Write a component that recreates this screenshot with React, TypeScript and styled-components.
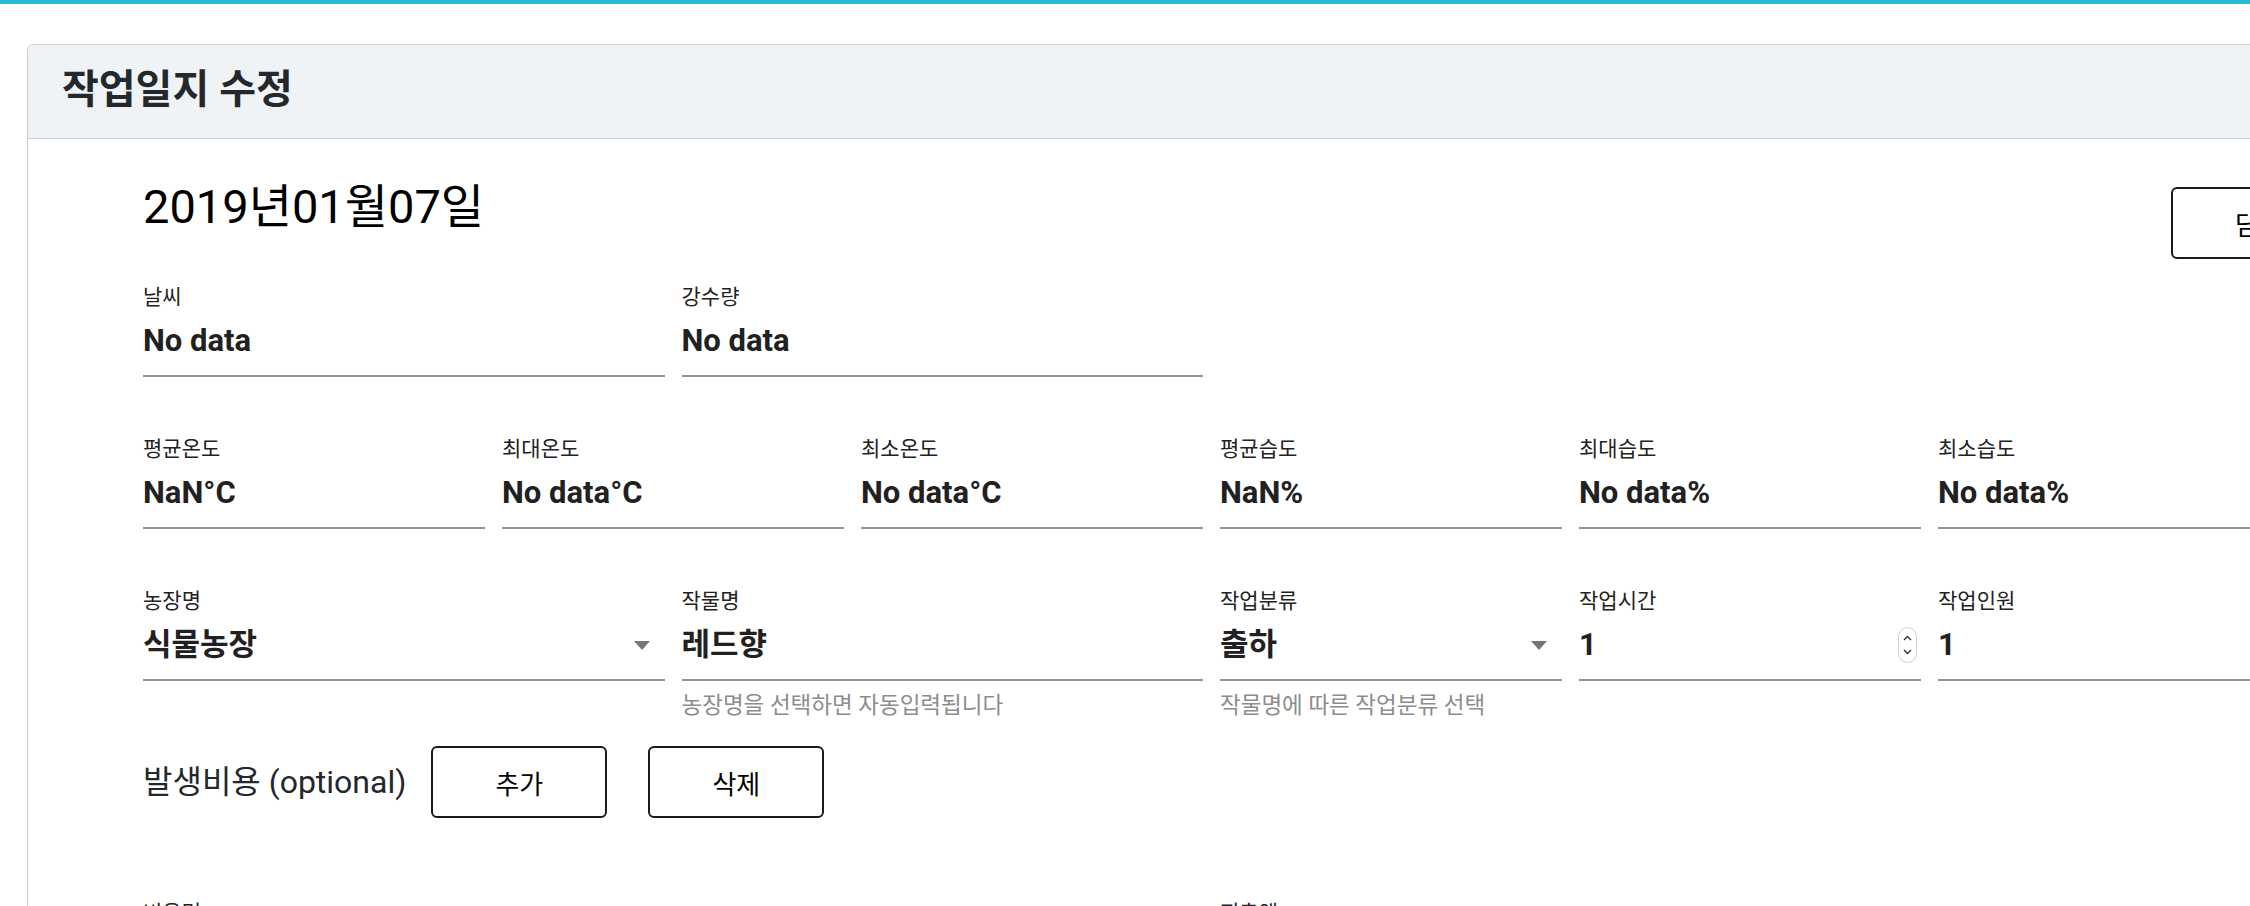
import styled, { createGlobalStyle } from 'styled-components'

const GlobalStyle = createGlobalStyle`
  html, body {
    margin: 0;
    padding: 0;
    overflow: hidden;
    background: #fff;
  }
  body {
    font-family: Roboto, "Noto Sans CJK KR", sans-serif;
    color: #23282c;
  }
`

const TopBar = styled.div`
  height: 4px;
  background: #23bcd4;
`

const Page = styled.div`
  padding: 40px 0 0 27px;
`

const Card = styled.section`
  width: 2400px;
  border: 1px solid #c8ced3;
  border-radius: 6px;
  background: #fff;
`

const CardHeader = styled.header`
  height: 93px;
  display: flex;
  align-items: center;
  padding: 0 34px;
  background: #f0f3f5;
  border-bottom: 1px solid #c8ced3;
  border-radius: 6px 6px 0 0;
`

const Title = styled.h2`
  margin: 0 0 4px;
  font-size: 40px;
  line-height: 48px;
  font-weight: 700;
  color: #23282c;
`

const CardBody = styled.div`
  padding: 38px 0 0 115px;
  height: 900px;
`

const DateRow = styled.div`
  width: 2204px;
  display: flex;
  justify-content: space-between;
  align-items: flex-start;
`

const DateText = styled.div`
  font-size: 47px;
  line-height: 60px;
  color: #000;
`

const OutlineButton = styled.button<{ $top?: number }>`
  width: 176px;
  height: 72px;
  margin-top: ${p => p.$top ?? 0}px;
  border: 2px solid #1a1a1a;
  border-radius: 6px;
  background: #fff;
  font-family: Roboto, "Noto Sans CJK KR", sans-serif;
  font-size: 26px;
  color: #000;
  flex-shrink: 0;
`

const Row = styled.div<{ $top: number }>`
  display: grid;
  grid-template-columns: repeat(12, 162.5px);
  column-gap: 17px;
  margin-top: ${p => p.$top}px;
`

const Field = styled.div<{ $span: number }>`
  grid-column: span ${p => p.$span};
`

const Label = styled.div`
  font-size: 21px;
  line-height: 24px;
  color: #222;
  white-space: nowrap;
`

const ValueBox = styled.div`
  display: flex;
  align-items: center;
  height: 32px;
  margin-top: 16px;
  padding-bottom: 18px;
  border-bottom: 2px solid #949494;
`

const Value = styled.span`
  font-size: 31px;
  line-height: 32px;
  font-weight: 700;
  color: #212121;
  white-space: nowrap;
`

const Arrow = styled.span`
  margin-left: auto;
  margin-right: 15px;
  width: 0;
  height: 0;
  border-left: 8px solid transparent;
  border-right: 8px solid transparent;
  border-top: 9px solid #757575;
`

const Spinner = styled.svg`
  margin-left: auto;
  margin-right: 4px;
`

const Helper = styled.div`
  margin-top: 12px;
  font-size: 22.5px;
  line-height: 24px;
  color: #8c8c8c;
  white-space: nowrap;
`

const CostRow = styled.div`
  display: flex;
  align-items: center;
  margin-top: 29px;
`

const CostTitle = styled.div`
  font-size: 32px;
  line-height: 36px;
  color: #23282c;
  margin-right: 25px;
`

const ButtonGap = styled.div`
  width: 41px;
`

type FieldProps = {
  span: number
  label: string
  value: string
  kind?: 'select' | 'number'
  helper?: string
}

const FormField = ({ span, label, value, kind, helper }: FieldProps) => (
  <Field $span={span}>
    <Label>{label}</Label>
    <ValueBox>
      <Value>{value}</Value>
      {kind === 'select' && <Arrow />}
      {kind === 'number' && (
        <Spinner width='19' height='36' viewBox='0 0 19 36'>
          <rect x='0.5' y='0.5' width='18' height='35' rx='9' fill='#fff' stroke='#cfcfcf' />
          <path d='M6 13 L9.5 9.5 L13 13' fill='none' stroke='#333' strokeWidth='1.4' />
          <path d='M6 23 L9.5 26.5 L13 23' fill='none' stroke='#333' strokeWidth='1.4' />
        </Spinner>
      )}
    </ValueBox>
    {helper && <Helper>{helper}</Helper>}
  </Field>
)

const App = () => {
  return (
    <>
      <GlobalStyle />
      <TopBar />
      <Page>
        <Card>
          <CardHeader>
            <Title>작업일지 수정</Title>
          </CardHeader>
          <CardBody>
            <DateRow>
              <DateText>2019년01월07일</DateText>
              <OutlineButton $top={10}>닫기</OutlineButton>
            </DateRow>

            <Row $top={26}>
              <FormField span={3} label='날씨' value='No data' />
              <FormField span={3} label='강수량' value='No data' />
            </Row>

            <Row $top={60}>
              <FormField span={2} label='평균온도' value='NaN°C' />
              <FormField span={2} label='최대온도' value='No data°C' />
              <FormField span={2} label='최소온도' value='No data°C' />
              <FormField span={2} label='평균습도' value='NaN%' />
              <FormField span={2} label='최대습도' value='No data%' />
              <FormField span={2} label='최소습도' value='No data%' />
            </Row>

            <Row $top={60}>
              <FormField span={3} label='농장명' value='식물농장' kind='select' />
              <FormField span={3} label='작물명' value='레드향' helper='농장명을 선택하면 자동입력됩니다' />
              <FormField span={2} label='작업분류' value='출하' kind='select' helper='작물명에 따른 작업분류 선택' />
              <FormField span={2} label='작업시간' value='1' kind='number' />
              <FormField span={2} label='작업인원' value='1' />
            </Row>

            <CostRow>
              <CostTitle>발생비용 (optional)</CostTitle>
              <OutlineButton>추가</OutlineButton>
              <ButtonGap />
              <OutlineButton>삭제</OutlineButton>
            </CostRow>

            <Row $top={83}>
              <FormField span={6} label='비용명' value='' />
              <FormField span={6} label='지출액' value='' />
            </Row>
          </CardBody>
        </Card>
      </Page>
    </>
  )
}

export default App
